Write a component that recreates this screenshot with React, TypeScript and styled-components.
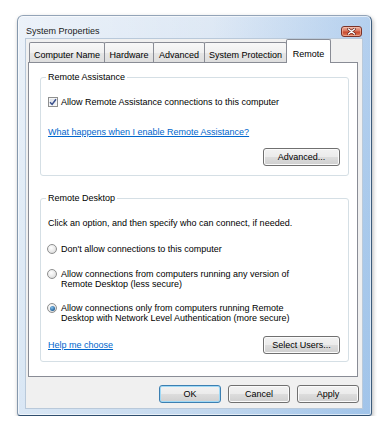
import React from "react";
import styled, { createGlobalStyle } from "styled-components";

const GlobalStyle = createGlobalStyle`
  html, body { margin: 0; padding: 0; background: #ffffff; }
  body {
    font-family: "Liberation Sans", Arial, sans-serif;
    font-size: 9px;
    color: #000000;
  }
  * { box-sizing: border-box; }
`;

const Stage = styled.div`
  padding: 15px 0 0 17px;
`;

const Window = styled.div`
  width: 355px;
  border: 1px solid;
  border-color: #93a4b8 #3d5c7c #2f4e6e #8598ad;
  border-radius: 6px 6px 3px 3px;
  padding: 0 8px 6px 7px;
  background:
    linear-gradient(90deg, rgba(255,255,255,0.4) 0%, rgba(255,255,255,0) 55%, rgba(100,160,225,0.35) 100%),
    linear-gradient(180deg, #dfe9f5 0%, #cddff1 50%, #c1d7ee 100%);
  box-shadow: 1px 2px 4px rgba(0,0,0,0.3), inset 0 0 0 1px rgba(255,255,255,0.6);
`;

const TitleBar = styled.div`
  height: 22px;
  padding-top: 8px;
  display: flex;
  align-items: center;
  justify-content: space-between;
`;

const Title = styled.span`
  padding-left: 1px;
  line-height: 12px;
  color: #1b1b1b;
`;

const CloseButton = styled.span`
  width: 21px;
  height: 11px;
  margin-right: 1px;
  border: 1px solid #7a3328;
  border-radius: 3px;
  display: flex;
  align-items: center;
  justify-content: center;
  background: linear-gradient(180deg, #eab0a0 0%, #d9775f 45%, #c84a30 55%, #de7b5a 100%);
  box-shadow: inset 0 0 0 1px rgba(255,205,185,0.5);
`;

const Client = styled.div`
  background: #f0f0f0;
  border: 1px solid #b9c9da;
  padding-bottom: 5px;
`;

const TabStrip = styled.div`
  display: flex;
  align-items: flex-end;
  height: 23px;
  padding-left: 3px;
  position: relative;
  z-index: 1;
`;

const Tab = styled.div<{ $active?: boolean; $w: number }>`
  width: ${(p) => p.$w}px;
  height: ${(p) => (p.$active ? 24 : 20)}px;
  margin-left: -1px;
  margin-bottom: ${(p) => (p.$active ? -1 : 0)}px;
  padding-top: ${(p) => (p.$active ? 8 : 6)}px;
  display: flex;
  justify-content: center;
  line-height: 12px;
  white-space: nowrap;
  border: 1px solid #898c95;
  border-bottom: none;
  border-radius: 2px 2px 0 0;
  background: ${(p) =>
    p.$active ? "#ffffff" : "linear-gradient(180deg, #f8f8f8 0%, #f0f0f0 50%, #e6e6e6 51%, #dedede 100%)"};
  position: relative;
  z-index: ${(p) => (p.$active ? 2 : 1)};
  &:first-child { margin-left: 0; }
`;

const Panel = styled.div`
  margin: 0 4px 0 2px;
  border: 1px solid #898c95;
  background: #ffffff;
  padding: 8px 8px 14px 11px;
`;

const Group = styled.fieldset<{ $mt?: number; $pb: number }>`
  margin: ${(p) => p.$mt ?? 0}px 0 0;
  padding: 0 8px ${(p) => p.$pb}px 7px;
  border: 1px solid #d5dfe5;
  border-radius: 3px;
  min-width: 0;
`;

const Legend = styled.legend`
  padding: 0 2px;
  margin-left: -2px;
  line-height: 12px;
  font-size: 9px;
`;

const Row = styled.div<{ $mt: number; $h?: number }>`
  margin-top: ${(p) => p.$mt}px;
  ${(p) => (p.$h ? `height: ${p.$h}px;` : "")}
  display: flex;
  align-items: center;
  line-height: 12px;
`;

const SplitRow = styled(Row)`
  justify-content: space-between;
`;

const EndRow = styled(Row)`
  justify-content: flex-end;
`;

const CheckLabel = styled.label`
  display: flex;
  align-items: center;
  gap: 3px;
`;

const CheckBox = styled.span`
  width: 10px;
  height: 10px;
  border: 1px solid #8e8f8f;
  background: linear-gradient(135deg, #d8dde6 0%, #f4f6f9 100%);
  box-shadow: inset 0 0 0 1px #f6f6f6;
  display: flex;
  align-items: center;
  justify-content: center;
`;

const OptionRow = styled.label<{ $mt: number }>`
  margin-top: ${(p) => p.$mt}px;
  display: flex;
  align-items: flex-start;
  gap: 4px;
  line-height: 10px;
`;

const Radio = styled.span<{ $checked?: boolean }>`
  flex: none;
  width: 10px;
  height: 10px;
  margin-left: -1px;
  border-radius: 50%;
  border: 1px solid #8e8f8f;
  background: radial-gradient(circle at 40% 35%, #ffffff 0%, #e6e6e6 60%, #c9c9c9 100%);
  display: flex;
  align-items: center;
  justify-content: center;
  &::after {
    content: "";
    display: ${(p) => (p.$checked ? "block" : "none")};
    width: 5px;
    height: 5px;
    border-radius: 50%;
    background: radial-gradient(circle at 40% 35%, #8cc4ee 0%, #2d6ea6 60%, #14466f 100%);
  }
`;

const Desc = styled.div<{ $mt: number }>`
  margin-top: ${(p) => p.$mt}px;
  line-height: 12px;
`;

const Link = styled.a`
  color: #0066cc;
  text-decoration: underline;
  cursor: pointer;
  line-height: 12px;
`;

const Button = styled.button<{ $w: number; $default?: boolean }>`
  width: ${(p) => p.$w}px;
  height: 18px;
  padding: 0;
  font-family: "Liberation Sans", Arial, sans-serif;
  font-size: 9px;
  color: #000000;
  border: 1px solid ${(p) => (p.$default ? "#3c7fb1" : "#707070")};
  border-radius: 3px;
  background: linear-gradient(180deg, #f2f2f2 0%, #ebebeb 49%, #dddddd 50%, #cfcfcf 100%);
  box-shadow: inset 0 0 0 1px ${(p) => (p.$default ? "#9fd9f6" : "#fbfbfb")};
`;

const ButtonRow = styled.div`
  margin-top: 8px;
  padding-right: 3px;
  display: flex;
  justify-content: flex-end;
  gap: 7px;
`;

export default function App() {
  return (
    <>
      <GlobalStyle />
      <Stage>
        <Window>
          <TitleBar>
            <Title>System Properties</Title>
            <CloseButton>
              <svg width="9" height="7" viewBox="0 0 9 7">
                <path d="M1.5 1 L7.5 6 M7.5 1 L1.5 6" stroke="#5a1a12" strokeWidth="2.6" strokeLinecap="round" />
                <path d="M1.5 1 L7.5 6 M7.5 1 L1.5 6" stroke="#ffffff" strokeWidth="1.5" strokeLinecap="round" />
              </svg>
            </CloseButton>
          </TitleBar>
          <Client>
            <TabStrip>
              <Tab $w={76}>Computer Name</Tab>
              <Tab $w={50}>Hardware</Tab>
              <Tab $w={52}>Advanced</Tab>
              <Tab $w={83}>System Protection</Tab>
              <Tab $w={45} $active>Remote</Tab>
            </TabStrip>
            <Panel>
              <Group $pb={9}>
                <Legend>Remote Assistance</Legend>
                <Row $mt={12} $h={14}>
                  <CheckLabel>
                    <CheckBox>
                      <svg width="8" height="8" viewBox="0 0 8 8">
                        <path d="M1 4.2 L3.1 6.4 L7 1.2" fill="none" stroke="#3a4f8c" strokeWidth="1.5" />
                      </svg>
                    </CheckBox>
                    Allow Remote Assistance connections to this computer
                  </CheckLabel>
                </Row>
                <Row $mt={17}>
                  <Link>What happens when I enable Remote Assistance?</Link>
                </Row>
                <EndRow $mt={10}>
                  <Button $w={77}>Advanced...</Button>
                </EndRow>
              </Group>
              <Group $mt={16} $pb={7}>
                <Legend>Remote Desktop</Legend>
                <Desc $mt={13}>Click an option, and then specify who can connect, if needed.</Desc>
                <OptionRow $mt={15}>
                  <Radio />
                  <span>Don't allow connections to this computer</span>
                </OptionRow>
                <OptionRow $mt={15}>
                  <Radio />
                  <span>
                    Allow connections from computers running any version of
                    <br />
                    Remote Desktop (less secure)
                  </span>
                </OptionRow>
                <OptionRow $mt={14}>
                  <Radio $checked />
                  <span>
                    Allow connections only from computers running Remote
                    <br />
                    Desktop with Network Level Authentication (more secure)
                  </span>
                </OptionRow>
                <SplitRow $mt={13}>
                  <Link>Help me choose</Link>
                  <Button $w={77}>Select Users...</Button>
                </SplitRow>
              </Group>
            </Panel>
            <ButtonRow>
              <Button $w={62} $default>OK</Button>
              <Button $w={62}>Cancel</Button>
              <Button $w={62}>Apply</Button>
            </ButtonRow>
          </Client>
        </Window>
      </Stage>
    </>
  );
}
